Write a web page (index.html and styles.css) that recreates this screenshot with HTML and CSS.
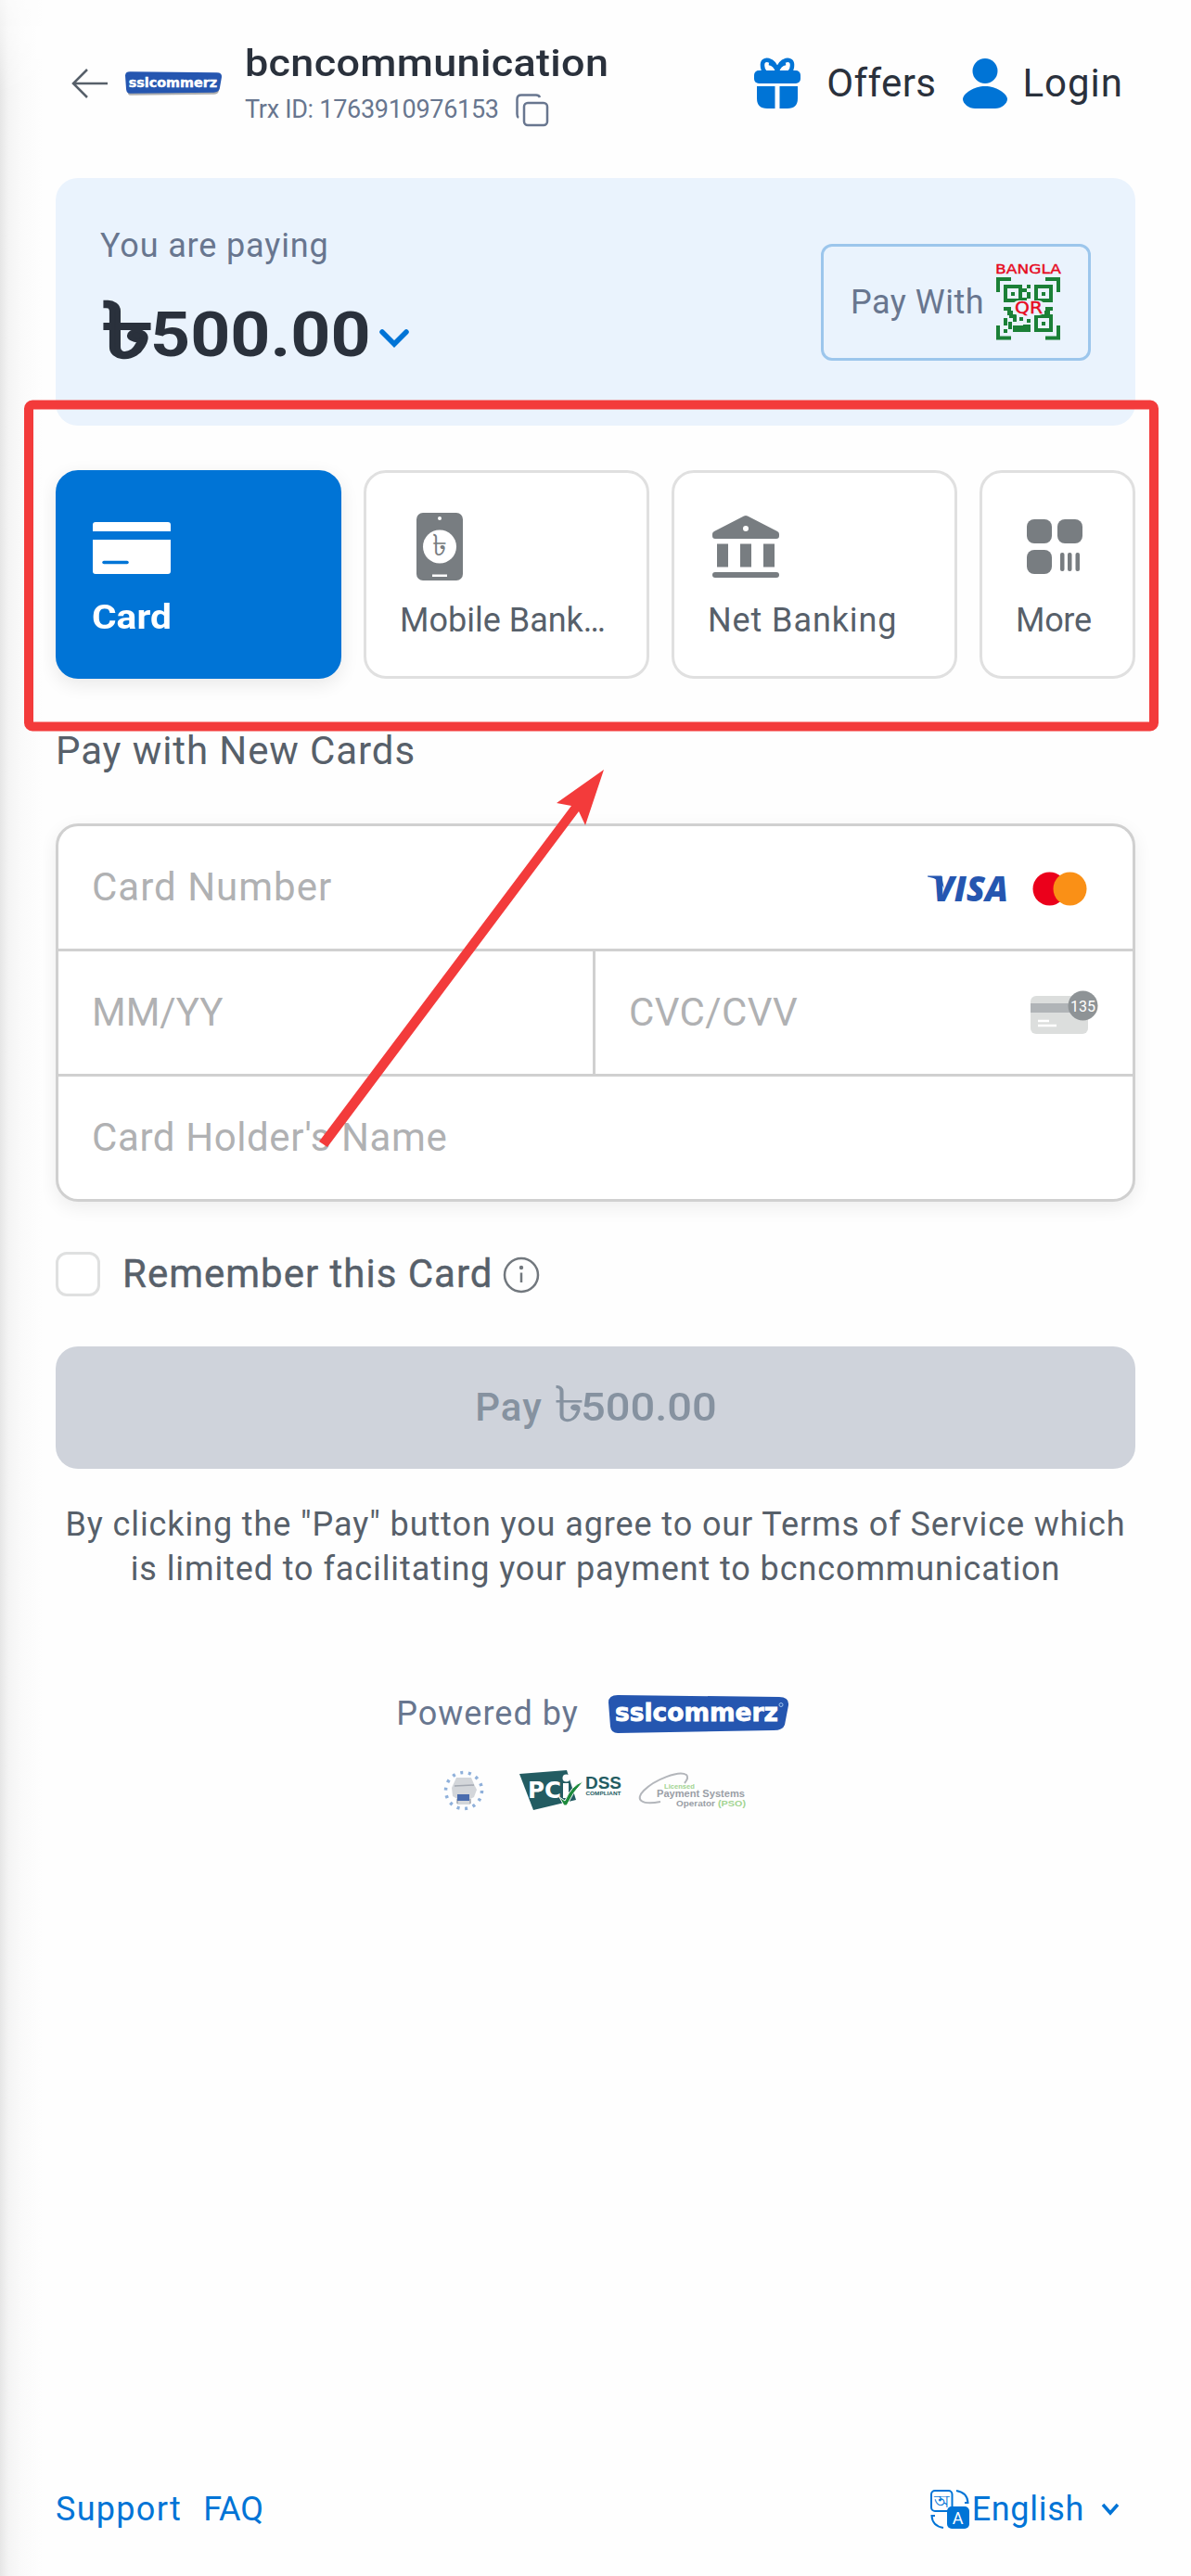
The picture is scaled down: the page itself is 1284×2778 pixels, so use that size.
FILE: index.html
```html
<!DOCTYPE html>
<html lang="en">
<head>
    <meta charset="UTF-8">
    <title>Payment</title>
    <link rel="stylesheet" href="styles.css">
</head>
<body>
<div class="edge-shadow"></div>

<header class="header">
    <svg class="back" width="40" height="32" viewBox="0 0 40 32"><path d="M17 1L2 16L17 31M2 16H39"/></svg>
    <svg class="store-logo" width="104" height="26" viewBox="0 0 194 48">
        <path d="M6 12L190 10Q192 20 188 40Q186 46 178 46L12 48Q6 48 5 42Z" fill="#777" opacity=".6"/>
        <path d="M0 8Q0 0 10 0L184 2Q195 2 194 11L190 34Q188 42 178 42L10 44Q3 44 2 36Z" fill="#2556b0"/>
        <text class="ssl-text" x="7" y="31" textLength="178" lengthAdjust="spacingAndGlyphs">sslcommerz</text>
    </svg>
    <div class="merchant">
        <h1 class="merchant-name">bcncommunication</h1>
        <div class="trx">
            <span>Trx ID: 1763910976153</span>
            <svg width="36" height="36" viewBox="0 0 36 36"><rect x="9" y="10" width="25" height="24" rx="4"/><path d="M3 26Q1.500 25 1.500 22V6Q1.500 1.500 6 1.500H22Q25 1.500 26 4"/></svg>
        </div>
    </div>
    <nav class="actions">
        <svg width="50" height="54" viewBox="0 0 50 54">
            <path class="bow" d="M25 14C22 0 8 -2 9 8Q9 12 12 15M25 14C28 0 42 -2 41 8Q41 12 38 15M25 14Q23 6 16 5M25 14Q27 6 34 5"/>
            <rect x="0" y="13" width="50" height="14" rx="5"/>
            <path d="M3 30H22.500V54H14Q3 54 3 43ZM27.500 30H47V43Q47 54 36 54H27.500Z"/>
        </svg>
        <span class="offers">Offers</span>
        <svg width="50" height="54" viewBox="0 0 50 54"><circle cx="25" cy="13.500" r="13.500"/><path d="M25 30C37 30 49 38 49 44C49 49 42 54 36 54H14C8 54 1 49 1 44C1 38 13 30 25 30Z"/></svg>
        <span class="login">Login</span>
    </nav>
</header>

<main>
    <section class="summary">
        <div>
            <div class="paying">You are paying</div>
            <div class="amount">
                <span class="taka">৳</span><span class="sum">500.00</span>
                <svg width="32" height="20" viewBox="0 0 32 20"><path d="M3 3L16 16L29 3"/></svg>
            </div>
        </div>
        <div class="qr-button">
            <span>Pay With</span>
            <svg width="69" height="83" viewBox="0 0 69 83">
                <text class="qr-red" x="-1" y="11" font-size="14.500" textLength="71" lengthAdjust="spacingAndGlyphs">BANGLA</text>
                <path class="qr-frame" d="M2 31V17H16M53 17H67V31M67 67V80.500H53M16 80.500H2V67"/>
                <path class="qr-eye" d="M10 25H26V40H10ZM43 25H59V40H43ZM43 57H59V72H43Z"/>
                <path class="qr-dots" d="M16 31h4v4h-4zM49 31h4v4h-4zM49 63h4v4h-4zM33 23h4v4h-4zM28 27h5v4h-5zM33 31h4v7h-4zM28 37h5v5h-5zM8 47h8v4h-8zM53 47h8v4h-8zM12 51h6v5h-6zM52 51h6v5h-6zM8 59h4v8h-4zM8 71h4v4h-4zM14 55h4v4h-4zM13 63h4v8h-4zM18 55h4v8h-4zM18 67h12v7h-12zM25 58h4v4h-4zM33 60h4v4h-4zM29 66h8v8h-8z"/>
                <rect class="qr-patch" x="18" y="40" width="34" height="16" rx="6"/>
                <text class="qr-red" x="20" y="54" font-size="17" textLength="30" lengthAdjust="spacingAndGlyphs">QR</text>
            </svg>
        </div>
    </section>

    <div class="tabs">
        <div class="tab active">
            <svg width="84" height="90" viewBox="-1 0 84 90"><path d="M3 20H81Q84 20 84 23V30H0V23Q0 20 3 20ZM0 39H84V73Q84 76 81 76H3Q0 76 0 73Z"/><path class="card-line" d="M12 63.500H37"/></svg>
            <span>Card</span>
        </div>
        <div class="tab mobile">
            <svg width="84" height="90" viewBox="-1 0 84 90">
                <rect x="17" y="10" width="50" height="73" rx="7"/>
                <circle cx="42" cy="46.500" r="18" fill="#fff"/><circle cx="42" cy="16" r="2" fill="#fff"/>
                <rect x="34" y="76.500" width="16" height="2.500" fill="#fff"/>
                <text x="42" y="56" text-anchor="middle">৳</text>
            </svg>
            <span>Mobile Bank…</span>
        </div>
        <div class="tab net">
            <svg width="84" height="90" viewBox="-1 0 84 90">
                <path fill-rule="evenodd" d="M38 13.500Q40 12.500 42 13.500L74 30Q76 31 76 33V35Q76 38 73 38H7Q4 38 4 35V33Q4 31 6 30ZM40 24A3 3 0 1 0 40 30A3 3 0 1 0 40 24"/>
                <path d="M9 43.500h12v25H9zM34 43.500h12v25H34zM59 43.500h12v25H59z"/>
                <rect x="4" y="74" width="72" height="6" rx="3"/>
            </svg>
            <span>Net Banking</span>
        </div>
        <div class="tab more">
            <svg width="84" height="90" viewBox="-1 0 84 90">
                <rect x="11" y="17" width="27" height="26" rx="8"/><rect x="44" y="17" width="27" height="26" rx="8"/><rect x="11" y="50" width="27" height="26" rx="8"/>
                <rect x="47" y="53" width="4.500" height="20" rx="2"/><rect x="55" y="53" width="4.500" height="20" rx="2"/><rect x="63.500" y="53" width="4.500" height="20" rx="2"/>
            </svg>
            <span>More</span>
        </div>
    </div>

    <h2 class="title">Pay with New Cards</h2>

    <div class="form">
        <div class="field wide">
            <span class="number">Card Number</span>
            <div class="brands">
                <svg width="86" height="28" viewBox="0 0 86 28">
                    <path d="M0 0.500H15L18 15Q14 3 0 1.500Z" fill="#2556b0"/>
                    <text class="visa" x="6" y="27.500" textLength="81" lengthAdjust="spacingAndGlyphs">VISA</text>
                </svg>
                <svg width="59" height="37" viewBox="0 0 59 37"><circle cx="18.500" cy="18.500" r="18" fill="#eb001b"/><circle cx="40.500" cy="18.500" r="18" fill="#fa9016"/></svg>
            </div>
        </div>
        <div class="field expiry"><span>MM/YY</span></div>
        <div class="field cvc">
            <span>CVC/CVV</span>
            <svg width="73" height="48" viewBox="0 0 73 48">
                <rect x="0" y="6" width="62" height="41" rx="6" fill="#dcdedd"/>
                <rect x="0" y="14" width="62" height="10" fill="#b0b4b7"/>
                <path d="M8 33H20M8 38H28" stroke="#fff" stroke-width="2.500"/>
                <circle cx="56.500" cy="16.500" r="16" fill="#8e9396"/>
                <text x="56.500" y="22.500" text-anchor="middle">135</text>
            </svg>
        </div>
        <div class="field wide holder"><span>Card Holder's Name</span></div>
    </div>

    <div class="remember">
        <div class="checkbox"></div>
        <span>Remember this Card</span>
        <svg width="40" height="40" viewBox="0 0 40 40"><circle cx="20" cy="20" r="18"/><path d="M20 17.500V28"/><circle class="dot" cx="20" cy="12" r="2.200"/></svg>
    </div>

    <div class="pay-button"><span class="pay">Pay</span><span class="taka">৳</span><span class="sum">500.00</span></div>

    <p class="terms">By clicking the "Pay" button you agree to our Terms of Service which<br>is limited to facilitating your payment to bcncommunication</p>

    <div class="powered">
        <span>Powered by</span>
        <svg width="195" height="42" viewBox="0 0 195 42">
            <path d="M0 8Q0 0 10 0L184 2Q195 2 194 11L190 32Q188 38 178 38L10 41Q3 41 2 34Z" fill="#2556b0"/>
            <text class="ssl-text" x="7" y="28" textLength="176" lengthAdjust="spacingAndGlyphs">sslcommerz</text>
            <circle cx="186" cy="10.500" r="2" fill="none" stroke="#9fc4ee"/>
        </svg>
    </div>

    <div class="badges">
        <svg width="44" height="46" viewBox="0 0 44 46">
            <circle cx="22" cy="23" r="19.500" fill="none" stroke="#8fb0da" stroke-width="3.500" stroke-dasharray="3 5.750"/>
            <path d="M14 9H30L33 16L36 22L33 30L29 32V38H15V32L10 29L9 20Z" fill="#d3d6da"/>
            <path d="M15 37V32M29 37V32M12 18L33 17" stroke="#a3a8b1" stroke-width="1.500"/>
            <rect x="15" y="27" width="13" height="7" fill="#4a6cae"/>
        </svg>
        <svg class="pci" width="110" height="44" viewBox="0 0 110 44">
            <path d="M0 4L51 0L61 32L15 43Z" fill="#235c62"/>
            <text class="pci-text" x="9" y="30" textLength="36" lengthAdjust="spacingAndGlyphs">PC</text>
            <path d="M47 14H53V30H47Z" fill="#fff"/><circle cx="50.500" cy="8.500" r="4" fill="#fff"/>
            <path d="M43 29L49 33Q56 16 69 12Q57 24 51 38H48Z" fill="#1d8a3c" stroke="#fff"/>
            <text class="dss" x="71" y="20" font-size="18" textLength="39" lengthAdjust="spacingAndGlyphs">DSS</text>
            <text class="dss" x="71.500" y="26.500" font-size="6" textLength="38" lengthAdjust="spacingAndGlyphs">COMPLIANT</text>
        </svg>
        <svg width="116" height="40" viewBox="0 0 116 40">
            <path d="M24 32C4 36 -4 30 6 20C18 8 44 -2 52 3Q55 6 50 12" fill="none" stroke="#b3b6bb" stroke-width="2"/>
            <text class="pso pso-green" x="28" y="18" font-size="7" textLength="33" lengthAdjust="spacingAndGlyphs">Licensed</text>
            <text class="pso" x="20" y="27" font-size="11" textLength="95" lengthAdjust="spacingAndGlyphs">Payment Systems</text>
            <text class="pso" x="41" y="37" font-size="9.500" textLength="42" lengthAdjust="spacingAndGlyphs">Operator</text>
            <text class="pso pso-green" x="86" y="37" font-size="9.500" textLength="30" lengthAdjust="spacingAndGlyphs">(PSO)</text>
        </svg>
    </div>
</main>

<footer class="footer">
    <a class="support">Support</a>
    <a class="faq">FAQ</a>
    <div class="language">
        <svg width="42" height="42" viewBox="0 0 42 42">
            <rect class="line" x="1" y="1" width="22.500" height="22" rx="4"/>
            <path class="line" d="M28 1Q40 3 40.500 14H37M14 41Q2 39 1.500 28H5"/>
            <text x="12" y="19" font-size="19" text-anchor="middle">অ</text>
            <rect x="18" y="18" width="24" height="24" rx="5"/>
            <text class="letter" x="30" y="36.500" font-size="18" text-anchor="middle">A</text>
        </svg>
        <span>English</span>
        <svg class="arrow" width="20" height="14" viewBox="0 0 20 14"><path d="M2 2L10 11L18 2"/></svg>
    </div>
</footer>

<!-- red marks over the payment tabs -->
<svg class="marks" width="1284" height="1300" viewBox="0 0 1284 1300">
    <rect x="31" y="436.500" width="1213" height="347" rx="4"/>
    <path d="M344 1231L616 869L600 866L651 830L631 890L624 875L353 1237Z"/>
</svg>
</body>
</html>
```
FILE: styles.css
```css
* {
    box-sizing: border-box;
}
body {
    position: relative;
    display: flex;
    flex-direction: column;
    min-height: 2778px;
    margin: 0;
    padding: 0 60px 48px;
    font-family: Roboto, "Noto Sans", sans-serif;
    font-size: 36px;
    line-height: 48px;
    color: #57606a;
    background: #fefefe;
}
svg {
    display: block;
    flex-shrink: 0;
    overflow: visible;
}
span, a {
    white-space: nowrap;
}
.edge-shadow {
    position: absolute;
    left: 0;
    top: 0;
    width: 46px;
    height: 100%;
    background: linear-gradient(to right, #e6e6e6, #f4f4f4 20%, #fafafa 50%, #fefefe);
    -webkit-mask-image: linear-gradient(to bottom, rgba(0,0,0,.3), #000 100px);
}

/* header */
.header {
    display: flex;
    align-items: center;
    height: 180px;
    margin-bottom: 12px;
    position: relative;
}
.back {
    margin: 0 18px 0 17px;
    fill: none;
    stroke: #57606a;
    stroke-width: 2.5;
}
.ssl-text {
    font: bold 26px "DejaVu Sans";
    fill: #fff;
    stroke: #fff;
    stroke-width: .8;
}
.merchant {
    width: 392px;
    margin: 4px 0 0 25px;
}
.merchant-name {
    margin: 0;
    font-size: 41px;
    font-weight: 500;
    line-height: 52px;
    letter-spacing: .3px;
    transform: scaleX(1.096);
    transform-origin: left;
    color: #2a313c;
}
.trx {
    display: flex;
    gap: 18px;
    font-size: 27px;
    line-height: 48px;
    letter-spacing: -.3px;
    color: #68768f;
}
.trx svg {
    margin-top: 7px;
    fill: none;
    stroke: #68768f;
    stroke-width: 2.5;
}
.actions {
    display: flex;
    align-items: center;
    margin-left: auto;
    margin-right: 13px;
    font-size: 42px;
    color: #2a313c;
    fill: #0074d6;
}
.bow {
    fill: none;
    stroke: #0074d6;
    stroke-width: 4.5;
}
.offers {
    margin: 0 28px 0 28px;
    letter-spacing: .4px;
}
.login {
    margin: 0 0 0 15px;
    letter-spacing: 1px;
}

/* amount box */
.summary {
    display: flex;
    align-items: center;
    justify-content: space-between;
    height: 267px;
    padding: 0 48px;
    border-radius: 24px;
    background: #eaf3fd;
    color: #68768f;
}
.paying {
    letter-spacing: .85px;
}
.amount {
    display: flex;
    align-items: center;
    height: 98px;
    margin-top: 24px;
    font-size: 66px;
    font-weight: 700;
    line-height: 98px;
    color: #2a313c;
}
.taka, .sum {
    transform-origin: left;
}
.amount .taka {
    width: 52px;
    margin: -10px 0 0 2px;
    font-size: 82px;
    transform: scaleX(1.35);
    -webkit-text-stroke: 1.5px #2a313c;
}
.amount .sum {
    width: 236px;
    transform: scaleX(1.14);
}
.amount svg {
    margin: 6px 0 0 11px;
    fill: none;
    stroke: #0074d6;
    stroke-width: 5.5;
    stroke-linecap: round;
}
.qr-button {
    display: flex;
    align-items: center;
    justify-content: space-between;
    width: 291px;
    height: 126px;
    padding: 0 30px 0 29px;
    border: 3px solid #9cc6ec;
    border-radius: 12px;
    letter-spacing: .5px;
}
.qr-red {
    font-family: "DejaVu Sans";
    fill: #e60a1e;
    stroke: #e60a1e;
    stroke-width: .4;
    letter-spacing: 0;
}
.qr-frame, .qr-eye {
    fill: none;
    stroke: #1b8037;
    stroke-width: 4;
}
.qr-dots {
    fill: #1b8037;
}
.qr-patch {
    fill: #eaf3fd;
}

/* payment tabs */
.tabs {
    display: grid;
    grid-template-columns: 308px 308px 308px 168px;
    gap: 24px;
    margin-top: 48px;
}
.tab {
    display: flex;
    flex-direction: column;
    gap: 12px;
    height: 225px;
    padding: 33px 0 0 36px;
    border: 3px solid #e0e0e0;
    border-radius: 24px;
    background: #fff;
    fill: #787d81;
}
.tab.active {
    gap: 9px;
    border-color: #0074d6;
    background: #0074d6;
    box-shadow: 0 6px 20px rgba(0, 0, 0, .09);
    color: #fff;
    fill: #fff;
    font-weight: 700;
}
.active span {
    transform: scaleX(1.13);
    transform-origin: left;
}
.card-line {
    stroke: #0074d6;
    stroke-width: 3.5;
    stroke-linecap: round;
}
.mobile text {
    font-size: 32px;
}
.net {
    letter-spacing: .9px;
}
.more {
    letter-spacing: -.3px;
}
.title {
    margin: 54px 0;
    font-size: 42px;
    font-weight: 400;
    line-height: 48px;
    letter-spacing: .9px;
}

/* card form */
.form {
    display: grid;
    grid-template-columns: 576px 1fr;
    gap: 3px;
    border: 3px solid #d0d0d0;
    border-radius: 24px;
    background: #d0d0d0;
    box-shadow: 0 6px 20px rgba(0, 0, 0, .07);
    overflow: hidden;
}
.field {
    display: flex;
    align-items: center;
    justify-content: space-between;
    height: 132px;
    padding: 0 37px 0 36px;
    background: #fff;
    font-size: 42px;
    color: #b0b1b3;
}
.wide {
    grid-column: span 2;
}
.number {
    letter-spacing: 1px;
}
.cvc {
    letter-spacing: .4px;
}
.holder {
    letter-spacing: .6px;
}
.brands {
    display: flex;
    align-items: center;
    gap: 27px;
    margin: 2px 12px 0 0;
}
.visa {
    font: italic 800 37px "Open Sans";
    fill: #2556b0;
    letter-spacing: 0;
}
.cvc text {
    font-size: 16px;
    letter-spacing: 0;
    fill: #fff;
}
.remember {
    display: flex;
    align-items: center;
    margin: 54px 0;
    font-size: 42px;
    letter-spacing: 1px;
}
.remember span {
    -webkit-text-stroke: .4px #57606a;
}
.checkbox {
    width: 48px;
    height: 48px;
    margin-right: 24px;
    border: 3px solid #dfe0e0;
    border-radius: 12px;
    background: #fff;
}
.remember svg {
    margin: 2px 0 0 10px;
    fill: none;
    stroke: #72787e;
    stroke-width: 2.5;
}
.remember .dot {
    fill: #72787e;
    stroke: none;
}
.pay-button {
    display: flex;
    align-items: center;
    justify-content: center;
    height: 132px;
    border-radius: 24px;
    background: #cfd3db;
    color: #8692a0;
    font-size: 42px;
    font-weight: 500;
}
.pay {
    margin-right: 12px;
    letter-spacing: 1px;
}
.pay-button .taka {
    width: 29px;
    margin-top: -6px;
    font-size: 54px;
    font-weight: 400;
    transform: scaleX(1.25);
}
.pay-button .sum {
    width: 146px;
    transform: scaleX(1.12);
}
.terms {
    margin: 36px 0 108px;
    text-align: center;
    white-space: nowrap;
    letter-spacing: .9px;
}

/* bottom logos */
.powered {
    display: flex;
    align-items: center;
    justify-content: center;
    gap: 32px;
    padding-right: 6px;
    color: #68768f;
    letter-spacing: 1px;
}
.powered svg, .badges svg {
    letter-spacing: 0;
}
.powered svg {
    margin-top: 2px;
}
.badges {
    display: flex;
    align-items: center;
    justify-content: center;
    height: 46px;
    margin-top: 36px;
    padding-right: 3px;
}
.pci {
    margin: 0 18px 0 38px;
}
.pci-text {
    font: bold 25px "DejaVu Sans";
    fill: #fff;
}
.dss {
    font-family: "Liberation Sans";
    font-weight: 700;
    fill: #235c62;
}
.pso {
    font-family: "Liberation Sans";
    font-weight: 700;
    fill: #9a9ea6;
}
.pso-green {
    fill: #a2d492;
}

.footer {
    display: flex;
    align-items: center;
    margin-top: auto;
    color: #0074d6;
    fill: #0074d6;
}
.support {
    letter-spacing: 1.3px;
}
.faq {
    margin-left: 23px;
}
.language {
    display: flex;
    align-items: center;
    margin-left: auto;
    margin-right: 17px;
    letter-spacing: .7px;
}
.language span {
    margin-left: 3px;
}
.line, .arrow {
    fill: none;
    stroke: #0074d6;
    stroke-width: 2;
}
.letter {
    fill: #fff;
}
.arrow {
    margin-left: 18px;
    stroke-width: 3.5;
}

.marks {
    position: absolute;
    left: 0;
    top: 0;
    fill: #f33b3b;
}
.marks rect {
    fill: none;
    stroke: #f33b3b;
    stroke-width: 10;
}
```
